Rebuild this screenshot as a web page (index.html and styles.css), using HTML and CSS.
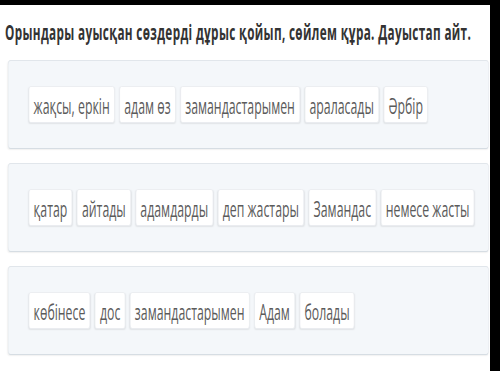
FILE: index.html
```html
<!DOCTYPE html>
<html>
<head>
    <title>Сөйлем құра</title>
    <meta charset="utf-8">
    <link rel="stylesheet" href="styles.css">
</head>
<body>
    <div class="screen">
        <div class="content">
            <h1 class="task-title">Орындары ауысқан сөздерді дұрыс қойып, сөйлем құра. Дауыстап айт.</h1>

            <div class="word-row">
                <span class="word">жақсы, еркін</span>
                <span class="word">адам өз</span>
                <span class="word">замандастарымен</span>
                <span class="word">араласады</span>
                <span class="word">Әрбір</span>
            </div>

            <div class="word-row">
                <span class="word">қатар</span>
                <span class="word">айтады</span>
                <span class="word">адамдарды</span>
                <span class="word">деп жастары</span>
                <span class="word">Замандас</span>
                <span class="word">немесе жасты</span>
            </div>

            <div class="word-row">
                <span class="word">көбінесе</span>
                <span class="word">дос</span>
                <span class="word">замандастарымен</span>
                <span class="word">Адам</span>
                <span class="word">болады</span>
            </div>
        </div>
    </div>
</body>
</html>
```

FILE: styles.css
```css
body {
    margin: 0;
    background-color: #000;
}
/* the photo of the screen has a black edge along the top and right */
.screen {
    width: 490px;
    height: 366px;
    background-color: #fff;
    border-top: 5px solid #000;
    border-right: 10px solid #000;
    overflow: hidden;
}
/* the screenshot is squeezed sideways, so the layout is drawn wide and scaled */
.content {
    width: 875px;
    padding-top: 13px;
    transform: scaleX(0.56);
    transform-origin: left top;
    font-family: "Open Sans", "Noto Sans", sans-serif;
}
.task-title {
    margin: 0 0 14px 9px;
    font-size: 21px;
    line-height: 28px;
    font-weight: bold;
    letter-spacing: 0.6px;
    color: #333;
    white-space: nowrap;
}
.word-row {
    display: flex;
    align-items: center;
    gap: 8px;
    height: 87px;
    margin: 0 0 14px 14px;
    padding-left: 36px;
    width: 821px;
    background-color: #f4f7fa;
    border: 1px solid #e1e6eb;
    border-bottom-color: #d6dde3;
    border-radius: 5px;
    box-shadow: 0 1px 2px rgba(0, 0, 0, 0.06);
}
.word {
    padding: 4px 8px 3px;
    font-size: 22px;
    line-height: 28px;
    color: #5b5b5b;
    background-color: #fff;
    border: 1px solid #e8ebee;
    border-radius: 4px;
    box-shadow: 0 1px 2px rgba(0, 0, 0, 0.08);
    white-space: nowrap;
}
```
